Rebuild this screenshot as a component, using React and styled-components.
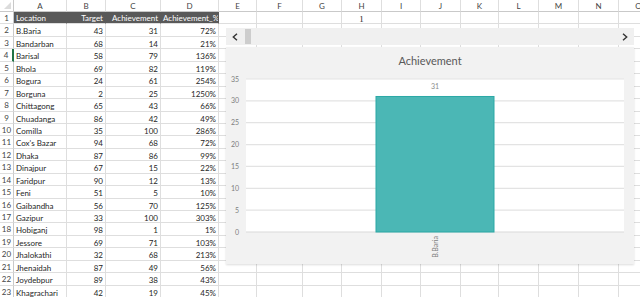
import React from 'react'
import styled, { createGlobalStyle } from 'styled-components'

const GlobalStyle = createGlobalStyle`
  html, body {
    margin: 0;
    padding: 0;
    background: #fff;
  }
  body {
    width: 640px;
    height: 297px;
    overflow: hidden;
    font-family: Lato, "Liberation Sans", sans-serif;
  }
`

const cols = [14, 53, 39, 55, 58, 38, 46, 39, 40, 39, 40, 38, 40, 40, 40, 40]
const letters = ['', 'A', 'B', 'C', 'D', 'E', 'F', 'G', 'H', 'I', 'J', 'K', 'L', 'M', 'N', 'O']

const rows = [
  ['Location', 'Target', 'Achievement', 'Achievement_%'],
  ['B.Baria', 43, 31, '72%'],
  ['Bandarban', 68, 14, '21%'],
  ['Barisal', 58, 79, '136%'],
  ['Bhola', 69, 82, '119%'],
  ['Bogura', 24, 61, '254%'],
  ['Borguna', 2, 25, '1250%'],
  ['Chittagong', 65, 43, '66%'],
  ['Chuadanga', 86, 42, '49%'],
  ['Comilla', 35, 100, '286%'],
  ["Cox's Bazar", 94, 68, '72%'],
  ['Dhaka', 87, 86, '99%'],
  ['Dinajpur', 67, 15, '22%'],
  ['Faridpur', 90, 12, '13%'],
  ['Feni', 51, 5, '10%'],
  ['Gaibandha', 56, 70, '125%'],
  ['Gazipur', 33, 100, '303%'],
  ['Hobiganj', 98, 1, '1%'],
  ['Jessore', 69, 71, '103%'],
  ['Jhalokathi', 32, 68, '213%'],
  ['Jhenaidah', 87, 49, '56%'],
  ['Joydebpur', 89, 38, '43%'],
  ['Khagrachari', 42, 19, '45%'],
]

const Sheet = styled.div`
  position: relative;
  display: grid;
  grid-template-columns: ${cols.map((c) => c + 'px').join(' ')};
  grid-template-rows: 12px repeat(23, 12.45px);
  width: 640px;
  height: 297px;
  overflow: hidden;
  font-size: 8px;
`

const Corner = styled.div`
  position: relative;
  border-right: 1px solid #c9c9c9;
  border-bottom: 1px solid #c9c9c9;
  &::after {
    content: "";
    position: absolute;
    right: 2px;
    bottom: 2px;
    border-left: 7px solid transparent;
    border-bottom: 7px solid #dcdcdc;
  }
`

const ColHead = styled.div`
  box-sizing: border-box;
  text-align: center;
  line-height: 12px;
  color: #444;
  border-right: 1px solid #dedede;
  border-bottom: 1px solid #c9c9c9;
  overflow: hidden;
`

const RowHead = styled.div`
  box-sizing: border-box;
  text-align: center;
  line-height: 13px;
  color: #444;
  border-right: ${({ $active }) => ($active ? '2px solid #217346' : '1px solid #c9c9c9')};
  border-bottom: 1px solid #dedede;
  overflow: hidden;
`

const Cell = styled.div`
  box-sizing: border-box;
  padding: ${({ $dark }) => ($dark ? '0 2px' : '1px 2px 0')};
  line-height: 12px;
  text-align: ${({ $align }) => $align};
  white-space: nowrap;
  overflow: hidden;
  color: ${({ $dark }) => ($dark ? '#fff' : '#262626')};
  background: ${({ $dark }) => ($dark ? '#595959' : 'transparent')};
  border-right: 1px solid ${({ $dark }) => ($dark ? '#595959' : '#dedede')};
  border-bottom: 1px solid #dedede;
  font-family: ${({ $serif }) => ($serif ? '"Liberation Serif", serif' : 'inherit')};
  font-size: ${({ $serif }) => ($serif ? '9px' : '8px')};
`

const ChartFrame = styled.div`
  position: absolute;
  left: 226px;
  top: 28px;
  width: 408px;
  display: flex;
  flex-direction: column;
  gap: 2px;
`

const ScrollBand = styled.div`
  height: 17px;
  background: #f0f0f0;
  display: flex;
  align-items: center;
  padding: 0 6px;
`

const Thumb = styled.div`
  width: 6px;
  height: 15px;
  margin-left: 7px;
  background: #cdcdcd;
`

const Spacer = styled.div`
  flex: 1;
`

const Panel = styled.div`
  height: 217px;
  background: #f2f2f2;
  box-shadow: 0 1px 2px rgba(0, 0, 0, 0.14);
  display: flex;
  flex-direction: column;
`

const Title = styled.div`
  height: 26px;
  line-height: 28px;
  text-align: center;
  font-size: 11px;
  color: #595959;
`

const Chevron = ({ dir }) => (
  <svg width="6" height="8" viewBox="0 0 6 8">
    <polyline
      points={dir === 'left' ? '5,0.8 1.3,4 5,7.2' : '1,0.8 4.7,4 1,7.2'}
      fill="none"
      stroke="#333"
      strokeWidth="1.4"
    />
  </svg>
)

const PLOT_X = 20
const PLOT_W = 378
const PLOT_TOP = 6
const PLOT_H = 153
const MAX = 35

const Plot = () => {
  const y = (v) => PLOT_TOP + PLOT_H - (v / MAX) * PLOT_H
  const ticks = [0, 5, 10, 15, 20, 25, 30, 35]
  const barX = 150
  const barW = 118
  return (
    <svg width="408" height="191" style={{ display: 'block' }}>
      <rect x={PLOT_X} y={PLOT_TOP} width={PLOT_W} height={PLOT_H} fill="#fff" />
      {ticks.map((t) => (
        <g key={t}>
          <line x1={PLOT_X} x2={PLOT_X + PLOT_W} y1={y(t)} y2={y(t)} stroke={t === 0 ? '#d9d9d9' : '#e3e3e3'} strokeWidth="1.2" />
          <text x="13" y={y(t) + 2.5} textAnchor="end" fontSize="7" fill="#7f7f7f" fontFamily="Lato, sans-serif">
            {t}
          </text>
        </g>
      ))}
      <rect x={barX} y={y(31)} width={barW} height={y(0) - y(31)} fill="#4bb7b5" stroke="#2aa8a5" strokeWidth="1" />
      <text x={barX + barW / 2} y={y(31) - 7} textAnchor="middle" fontSize="7" fill="#8c8c8c" fontFamily="Lato, sans-serif">
        31
      </text>
      <text
        transform={`translate(${barX + barW / 2 + 2.5},163) rotate(-90)`}
        textAnchor="end"
        fontSize="7"
        fill="#7f7f7f"
        fontFamily="Lato, sans-serif"
      >
        B.Baria
      </text>
    </svg>
  )
}

const App = () => {
  return (
    <>
      <GlobalStyle />
      <Sheet>
        {letters.map((l, i) => (i === 0 ? <Corner key="c" /> : <ColHead key={l}>{l}</ColHead>))}
        {rows.map((r, ri) => (
          <React.Fragment key={ri}>
            <RowHead $active={ri === 3}>{ri + 1}</RowHead>
            {letters.slice(1).map((l, ci) => {
              const v = ci < 4 ? r[ci] : ri === 0 && l === 'H' ? 1 : ''
              return (
                <Cell
                  key={l}
                  $dark={ri === 0 && ci < 4}
                  $serif={ri === 0 && l === 'H'}
                  $align={ci === 0 ? 'left' : ci < 4 ? 'right' : 'center'}
                >
                  {v}
                </Cell>
              )
            })}
          </React.Fragment>
        ))}
        <ChartFrame>
          <ScrollBand>
            <Chevron dir="left" />
            <Thumb />
            <Spacer />
            <Chevron dir="right" />
          </ScrollBand>
          <Panel>
            <Title>Achievement</Title>
            <Plot />
          </Panel>
        </ChartFrame>
      </Sheet>
    </>
  )
}

export default App
